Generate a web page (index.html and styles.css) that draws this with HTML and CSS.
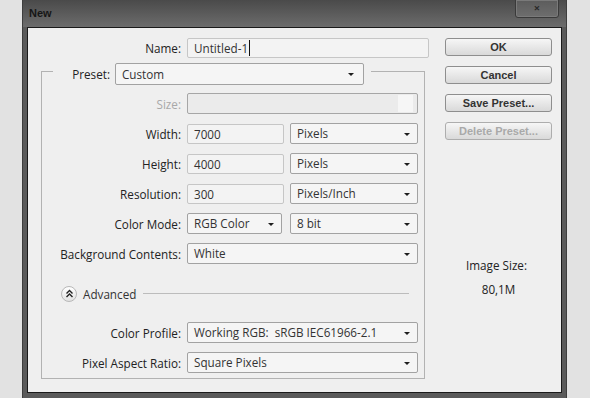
FILE: index.html
```html
<!DOCTYPE html>
<html>
<head>
    <title>New</title>
    <link rel="stylesheet" href="styles.css">
</head>
<body>
    <div class="window">
        <div class="titlebar">
            <span class="title">New</span>
            <span class="close">&#215;</span>
        </div>
        <div class="content">
            <div class="form">
                <div class="row">
                    <label class="label">Name:</label>
                    <div class="field name-field"><span class="caret">Untitled-1</span></div>
                </div>

                <fieldset class="group">
                    <legend class="preset">
                        <span class="preset-label">Preset:</span>
                        <div class="select preset-select">Custom</div>
                    </legend>
                    <div class="rows">
                        <div class="row">
                            <label class="label label-off">Size:</label>
                            <div class="field wide field-off"><span class="field-end"></span></div>
                        </div>
                        <div class="row">
                            <label class="label">Width:</label>
                            <div class="field short">7000</div>
                            <div class="select unit">Pixels</div>
                        </div>
                        <div class="row">
                            <label class="label">Height:</label>
                            <div class="field short">4000</div>
                            <div class="select unit">Pixels</div>
                        </div>
                        <div class="row">
                            <label class="label">Resolution:</label>
                            <div class="field short">300</div>
                            <div class="select unit">Pixels/Inch</div>
                        </div>
                        <div class="row">
                            <label class="label">Color Mode:</label>
                            <div class="select mode">RGB Color</div>
                            <div class="select unit">8 bit</div>
                        </div>
                        <div class="row">
                            <label class="label">Background Contents:</label>
                            <div class="select wide">White</div>
                        </div>
                        <div class="advanced">
                            <span class="toggle">
                                <svg width="9" height="9" viewBox="0 0 9 9"><path d="M1.5 4.5 L4.5 1.5 L7.5 4.5 M1.5 8 L4.5 5 L7.5 8" fill="none" stroke="#222" stroke-width="1.4"/></svg>
                            </span>
                            <span class="advanced-text">Advanced</span>
                            <span class="rule"></span>
                        </div>
                        <div class="row">
                            <label class="label">Color Profile:</label>
                            <div class="select wide">Working RGB:&nbsp; sRGB IEC61966-2.1</div>
                        </div>
                        <div class="row">
                            <label class="label">Pixel Aspect Ratio:</label>
                            <div class="select wide">Square Pixels</div>
                        </div>
                    </div>
                </fieldset>
            </div>

            <div class="side">
                <button class="btn">OK</button>
                <button class="btn">Cancel</button>
                <button class="btn">Save Preset...</button>
                <button class="btn" disabled>Delete Preset...</button>
                <p class="size-title">Image Size:</p>
                <p class="size-value">80,1M</p>
            </div>
        </div>
    </div>
</body>
</html>
```

FILE: styles.css
```css
body {
    margin: 0;
    background-color: #e2e2e2;
    font-family: "Open Sans", Arial, sans-serif;
    font-size: 11.7px;
    color: #222;
}

.window {
    margin-left: 22px;
    width: 545px;
    height: 398px;
    padding: 0 4px;
    box-sizing: border-box;
    background-color: #5a5a5a;
    border-left: 1px solid #3e3e3e;
    border-right: 1px solid #3e3e3e;
    overflow: hidden;
}

.titlebar {
    display: flex;
    align-items: center;
    justify-content: space-between;
    height: 27px;
    margin: 0 -4px;
    padding-left: 6px;
    background: linear-gradient(#4a4a4a, #6c6c6c);
}

.title {
    font-family: "Liberation Sans", Arial, sans-serif;
    font-weight: bold;
    font-size: 11px;
    color: #161616;
    margin-top: -1px;
}

.close {
    align-self: flex-start;
    width: 42px;
    height: 17px;
    margin-top: -1px;
    margin-right: 7px;
    border: 1px solid #3a3a3a;
    border-radius: 0 0 3px 3px;
    background: linear-gradient(#5c5c5c, #6e6e6e);
    box-shadow: inset 0 0 0 1px #7a7a7a;
    color: #2a2a2a;
    font-size: 11px;
    font-weight: bold;
    line-height: 16px;
    text-align: center;
}

.content {
    display: flex;
    height: 364px;
    background-color: #efefef;
    border: 1px solid #1a1a1a;
}

.form {
    width: 402px;
    padding-top: 9px;
}

.row {
    display: flex;
    align-items: center;
    height: 21px;
}

.label {
    width: 153px;
    margin-right: 6px;
    text-align: right;
    white-space: nowrap;
}

.group .label {
    width: 139px;
}

.label-off {
    color: #a8a8a8;
}

.field {
    height: 20px;
    padding-left: 6px;
    box-sizing: border-box;
    background-color: #f3f3f3;
    border: 1px solid #c6c6c6;
    border-radius: 2px;
    line-height: 18px;
    color: #333;
}

.name-field {
    width: 242px;
}

.caret {
    padding-right: 1px;
    border-right: 1px solid #111;
}

.short {
    width: 97px;
    margin-right: 6px;
}

.wide {
    width: 231px;
}

.field-off {
    position: relative;
    height: 21px;
    background-color: #ebebeb;
    border-color: #a6a6a6;
}

.field-end {
    position: absolute;
    right: 4px;
    top: 1px;
    bottom: 1px;
    width: 15px;
    background-color: #f6f6f6;
}

.select {
    position: relative;
    height: 21px;
    padding-left: 6px;
    box-sizing: border-box;
    background-color: #f5f5f5;
    border: 1px solid #a2a2a2;
    border-radius: 2px;
    line-height: 19px;
    color: #333;
    white-space: nowrap;
}

.select::after {
    content: "";
    position: absolute;
    right: 7px;
    top: 9px;
    border-left: 3px solid transparent;
    border-right: 3px solid transparent;
    border-top: 3px solid #1e1e1e;
}

.unit {
    width: 128px;
}

.mode {
    width: 95px;
    margin-right: 8px;
}

.group {
    margin: 0 0 0 13px;
    padding: 8px 6px 5px 0;
    width: 384px;
    box-sizing: border-box;
    border: 1px solid #b2b2b2;
}

.preset {
    display: flex;
    align-items: center;
    margin-left: 11px;
    padding: 5px 7px 0 0;
}

.preset-label {
    width: 57px;
    margin-right: 5px;
    text-align: right;
}

.preset-select {
    width: 249px;
    height: 22px;
    line-height: 20px;
}

.preset-select::after {
    right: 9px;
}

.rows {
    display: flex;
    flex-direction: column;
    gap: 9px;
}

.advanced {
    display: flex;
    align-items: center;
    height: 21px;
    margin: 10px 0 9px 19px;
}

.toggle {
    display: flex;
    align-items: center;
    justify-content: center;
    width: 14px;
    height: 14px;
    border: 1px solid #b8b8b8;
    border-radius: 50%;
    background: linear-gradient(#ffffff, #e2e2e2);
}

.advanced-text {
    margin-left: 6px;
    color: #333;
}

.rule {
    flex: 1;
    height: 1px;
    margin: 0 9px 0 7px;
    background-color: #bcbcbc;
}

.side {
    width: 107px;
    margin-left: 15px;
    padding-top: 10px;
    display: flex;
    flex-direction: column;
    gap: 10px;
}

.btn {
    height: 18px;
    padding: 0;
    font-family: "Liberation Sans", Arial, sans-serif;
    font-size: 11px;
    font-weight: bold;
    color: #333;
    background: linear-gradient(#f6f6f6, #d9d9d9);
    border: 1px solid #8e8e8e;
    border-radius: 3px;
}

.btn:disabled {
    color: #a9a9a9;
    border-color: #adadad;
}

.size-title {
    margin: 108px 0 0 -4px;
    text-align: center;
    line-height: 14px;
}

.size-value {
    margin: 0;
    text-align: center;
    line-height: 14px;
}
```
